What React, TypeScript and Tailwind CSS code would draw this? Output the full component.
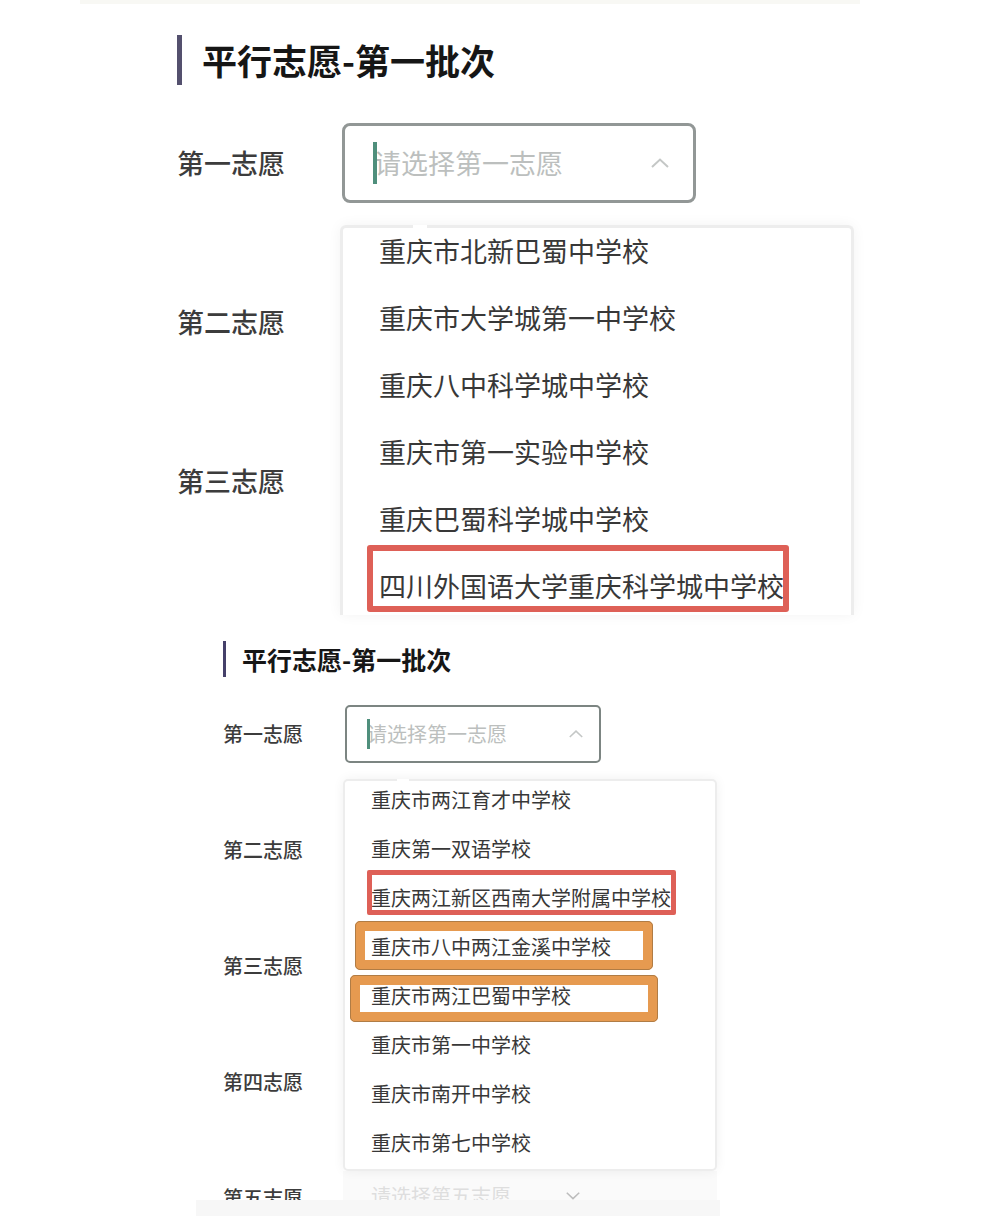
import React from "react";
import clsx from "clsx";

type Mark = "red" | "orange" | "orangeWide";

interface School {
  name: string;
  mark?: Mark;
}

interface PanelProps {
  id: string;
  compact?: boolean;
  labels: string[];
  schools: School[];
  children?: React.ReactNode;
}

const scienceCity: School[] = [
  { name: "重庆市北新巴蜀中学校" },
  { name: "重庆市大学城第一中学校" },
  { name: "重庆八中科学城中学校" },
  { name: "重庆市第一实验中学校" },
  { name: "重庆巴蜀科学城中学校" },
  { name: "四川外国语大学重庆科学城中学校", mark: "red" },
];

const liangjiang: School[] = [
  { name: "重庆市两江育才中学校" },
  { name: "重庆第一双语学校" },
  { name: "重庆两江新区西南大学附属中学校", mark: "red" },
  { name: "重庆市八中两江金溪中学校", mark: "orange" },
  { name: "重庆市两江巴蜀中学校", mark: "orangeWide" },
  { name: "重庆市第一中学校" },
  { name: "重庆市南开中学校" },
  { name: "重庆市第七中学校" },
];

const Chevron: React.FC<{ className?: string; down?: boolean }> = ({ className, down }) => (
  <svg viewBox="0 0 18 10" fill="none" stroke="currentColor" strokeWidth="2" className={className} aria-hidden="true">
    <path d={down ? "M1 1 L9 8.5 L17 1" : "M1 9 L9 1.5 L17 9"} />
  </svg>
);

// Hand-drawn style frames that sit over an option
const Frame: React.FC<{ mark: Mark; compact?: boolean }> = ({ mark, compact }) => (
  <span
    className={clsx(
      "pointer-events-none absolute",
      mark === "red" && !compact && "-top-2 left-6 h-[67px] w-[422px] rounded-[3px] border-[6px] border-[#de6057]",
      mark === "red" && compact && "-top-[3px] left-[22px] h-[45px] w-[309px] rounded-[2px] border-[5px] border-[#de6057]",
      mark === "orange" &&
        "-top-[1px] left-[10px] h-[49px] w-[298px] rounded-[5px] border-[10px] border-[#e69a50] outline-1 -outline-offset-1 outline-[#b07c45]",
      mark === "orangeWide" &&
        "top-1 left-[5px] h-[47px] w-[308px] rounded-[5px] border-[10px] border-[#e69a50] outline-1 -outline-offset-1 outline-[#b07c45]"
    )}
  />
);

const Panel: React.FC<PanelProps> = ({ id, compact, labels, schools, children }) => {
  const last = labels.length - 1;

  return (
    <section className={compact ? "pl-[223px] pt-[26px]" : "pl-[177px] pt-[31px]"}>
      <div className={clsx("flex items-center", compact ? "gap-4" : "gap-5")}>
        <span className={compact ? "h-9 w-[3px] bg-[#45406a]" : "h-[50px] w-[5px] bg-[#54506e]"} />
        <h2 className={clsx("font-bold text-[#161616]", compact ? "text-[25px] leading-9" : "text-[35px] leading-[50px]")}>
          平行志愿-第一批次
        </h2>
      </div>

      <div className={clsx("flex items-start", compact ? "mt-7" : "mt-[38px]")}>
        {/* Labels */}
        <div
          className={clsx(
            "flex shrink-0 flex-col font-medium text-[#3c3c3c]",
            compact ? "w-[120px] gap-[58px] text-[20px] leading-[58px]" : "w-[163px] gap-[79px] text-[27px] leading-[80px]"
          )}
        >
          {labels.map((label, i) => {
            const cls = clsx("block overflow-hidden", compact ? (i === last ? "h-[31px]" : "h-[58px]") : "h-20");
            if (i === 0) return <label key={label} htmlFor={id} className={cls}>{label}</label>;
            if (compact && i === last) return <label key={label} htmlFor={`${id}-last`} className={cls}>{label}</label>;
            return <span key={label} className={cls}>{label}</span>;
          })}
        </div>

        {/* Field with its open list */}
        <div className={clsx("min-w-0 flex-1", compact ? "max-w-[374px]" : "max-w-[514px]")}>
          <div
            className={clsx(
              "relative ml-[2px] flex items-center bg-white",
              compact
                ? "h-[58px] max-w-[256px] rounded-[5px] border-2 border-[#7c8582] pl-5 pr-4"
                : "h-20 max-w-[354px] rounded-lg border-[3px] border-[#929796] pl-[29px] pr-6"
            )}
          >
            <input
              id={id}
              type="text"
              role="combobox"
              aria-expanded="true"
              aria-controls={`${id}-list`}
              placeholder="请选择第一志愿"
              className={clsx(
                "w-full min-w-0 bg-transparent outline-none placeholder:text-[#bcbfbe]",
                compact ? "text-[20px]" : "text-[27px]"
              )}
            />
            <span className={clsx("absolute bg-[#4f8f7c]", compact ? "left-5 h-[30px] w-[3px]" : "left-7 h-[42px] w-1")} />
            <Chevron className={clsx("shrink-0 text-[#c4c7c6]", compact ? "w-[14px]" : "w-[18px]")} />
          </div>

          <div
            className={clsx(
              "relative border-[#ededed] bg-white",
              compact
                ? "mt-4 rounded-[5px] border-2 pb-[2px] shadow-[0_0_12px_rgba(0,0,0,0.06)]"
                : "mt-[22px] rounded-t-md border-x-[3px] border-t-[3px] shadow-[0_0_14px_rgba(0,0,0,0.05)]"
            )}
          >
            <span className={clsx("absolute bg-white", compact ? "-top-[2px] left-[52px] h-[2px] w-3" : "-top-[3px] left-[70px] h-[3px] w-[14px]")} />
            <div className="overflow-hidden">
              <ul id={`${id}-list`} role="listbox" className={compact ? "-mt-[6px]" : "-mt-[10px] -mb-[5px]"}>
                {schools.map((school) => (
                  <li key={school.name} role="option" aria-selected="false" className="relative">
                    <button
                      type="button"
                      className={clsx(
                        "block w-full whitespace-nowrap text-left text-[#383838]",
                        compact ? "h-[49px] pl-[26px] text-[20px]" : "h-[67px] pl-9 text-[27px]"
                      )}
                    >
                      {school.name}
                    </button>
                    {school.mark && <Frame mark={school.mark} compact={compact} />}
                  </li>
                ))}
              </ul>
            </div>
          </div>
          {children}
        </div>
      </div>
    </section>
  );
};

export default function App() {
  return (
    <main lang="zh-CN" className="min-h-screen overflow-hidden bg-white font-['Noto_Sans_CJK_SC',sans-serif]">
      <div className="ml-20 h-1 max-w-[780px] bg-[#f8f8f4]" />
      <Panel id="choice-a" labels={["第一志愿", "第二志愿", "第三志愿"]} schools={scienceCity} />
      <Panel
        id="choice-b"
        compact
        labels={["第一志愿", "第二志愿", "第三志愿", "第四志愿", "第五志愿"]}
        schools={liangjiang}
      >
        <button
          id="choice-b-last"
          type="button"
          className="flex h-[29px] w-full items-start overflow-hidden bg-[#fafafa] pl-7 text-left text-[20px] leading-[50px] text-[#dedede]"
        >
          <span>请选择第五志愿</span>
          <Chevron down className="ml-[55px] mt-[21px] w-[14px] text-[#bdbdbd]" />
        </button>
      </Panel>
      <div className="ml-[196px] h-4 max-w-[524px] bg-[#f7f7f7]" />
    </main>
  );
}
